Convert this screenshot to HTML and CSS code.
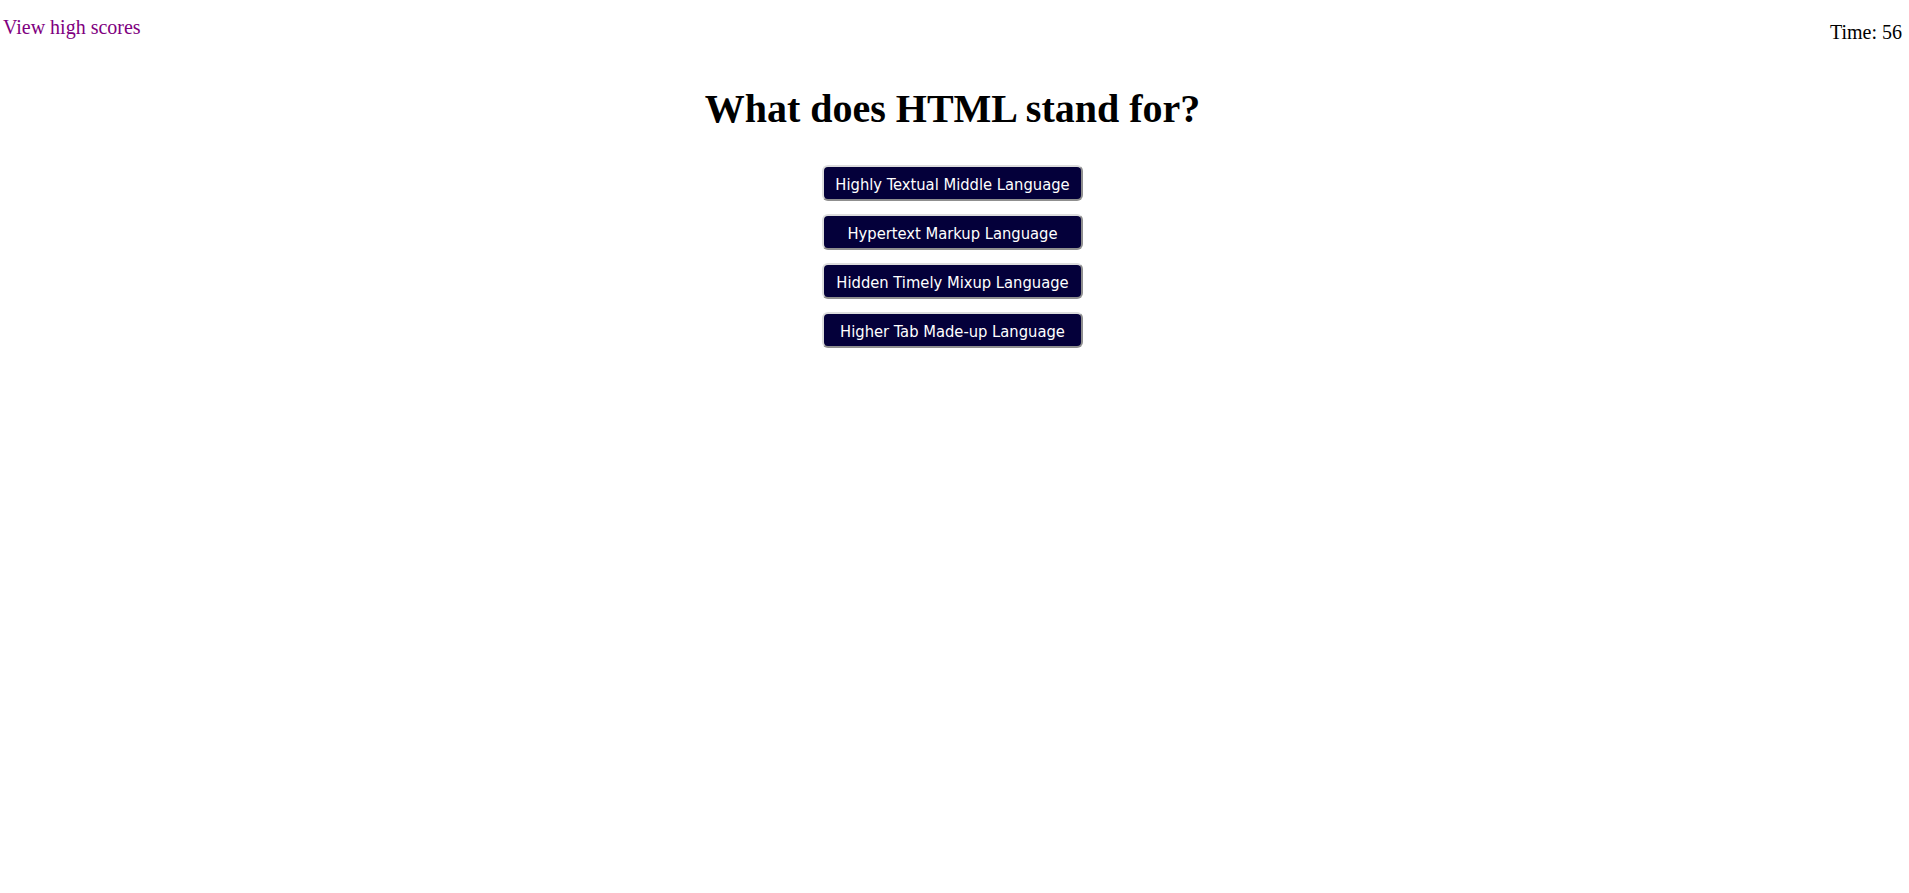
FILE: index.html
```html
<!DOCTYPE html>
<html>
<head>
<meta charset="utf-8">
<title>Quiz</title>
<link rel="stylesheet" href="styles.css">
</head>
<body>
<header class="top">
  <a class="scores" href="#">View high scores</a>
  <div class="timer">Time: 56</div>
</header>
<main class="quiz">
  <h1 class="question">What does HTML stand for?</h1>
  <div class="answers">
    <button class="answer">Highly Textual Middle Language</button>
    <button class="answer">Hypertext Markup Language</button>
    <button class="answer">Hidden Timely Mixup Language</button>
    <button class="answer">Higher Tab Made-up Language</button>
  </div>
</main>
</body>
</html>
```
FILE: styles.css
```css
html, body {
  margin: 0;
  padding: 0;
  background: #ffffff;
}
body {
  font-family: "Liberation Serif", "Times New Roman", serif;
  color: #000;
}
.top {
  display: flex;
  justify-content: space-between;
  align-items: flex-start;
  padding: 0 7px 0 3px;
}
.scores {
  font-size: 20px;
  line-height: 23px;
  color: #800080;
  text-decoration: none;
  margin-top: 16px;
}
.timer {
  font-size: 20px;
  line-height: 23px;
  margin-top: 21px;
}
.quiz {
  display: flex;
  flex-direction: column;
  align-items: center;
  padding-right: 4px;
}
.question {
  font-size: 40px;
  line-height: 46px;
  font-weight: bold;
  margin: 42px 0 0 0;
}
.answers {
  display: flex;
  flex-direction: column;
  align-items: center;
  gap: 13px;
  margin-top: 33px;
}
.answer {
  box-sizing: border-box;
  width: 261px;
  height: 36px;
  padding: 2px 0 0 0;
  background: #04003a;
  color: #ffffff;
  font-family: "DejaVu Sans Condensed", "DejaVu Sans", sans-serif;
  font-stretch: condensed;
  font-size: 16.4px;
  border: 2px solid;
  border-color: #dddddd #8f8f8f #8f8f8f #dddddd;
  border-radius: 6px;
  cursor: pointer;
}
```
